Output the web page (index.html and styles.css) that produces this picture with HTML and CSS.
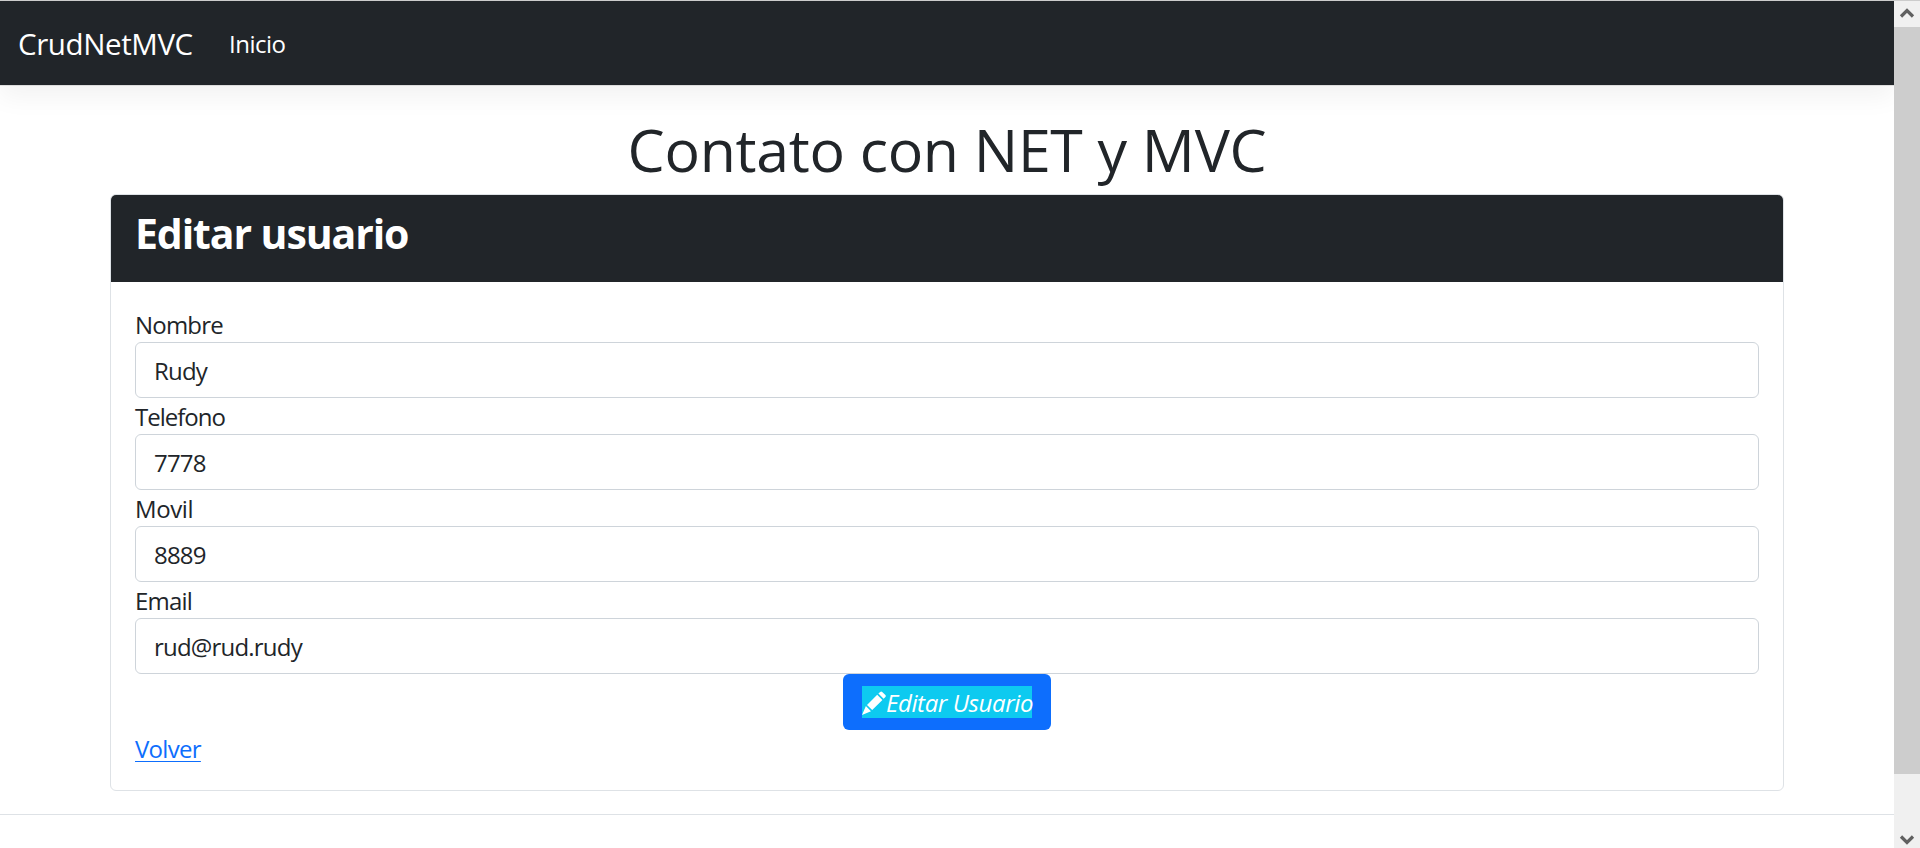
FILE: index.html
```html
<!DOCTYPE html>
<html lang="es">
<head>
<meta charset="utf-8">
<title>CrudNetMVC</title>
<link rel="stylesheet" href="styles.css">
</head>
<body>
<div class="window">
  <div class="page">
    <header class="navbar">
      <a class="brand" href="#">CrudNetMVC</a>
      <a class="nav-link" href="#">Inicio</a>
    </header>
    <main class="container">
      <h1 class="title"><span>Contato con NET y MVC</span></h1>
      <section class="card">
        <div class="card-header"><h3 class="card-title">Editar usuario</h3></div>
        <form class="card-body">
          <label class="label" for="nombre">Nombre</label>
          <input class="control" id="nombre" value="Rudy">
          <label class="label label-long" for="telefono">Telefono</label>
          <input class="control" id="telefono" value="7778">
          <label class="label label-short" for="movil">Movil</label>
          <input class="control" id="movil" value="8889">
          <label class="label" for="email">Email</label>
          <input class="control" id="email" value="rud@rud.rudy">
          <button class="btn" type="button"><span class="selected"><svg class="pencil" viewBox="0 0 24 24"><path d="M18.2.9Q19.2 0 20.2.9L23.4 4.100Q24.200 5 23.400 5.900L21.600 7.700 16.400 2.500ZM15.200 3.700 20.400 8.900 10.200 19.100 5 13.900ZM3.900 15.100 9 20.200 0 24Z"/></svg><em class="btn-text">Editar Usuario</em></span></button>
          <a class="back" href="#">Volver</a>
        </form>
      </section>
    </main>
    <footer class="footer"></footer>
  </div>
  <div class="scrollbar">
    <svg class="arrow" viewBox="0 0 26 26"><path d="M7 15.500 13 9.500 19 15.500"/></svg>
    <div class="thumb"></div>
    <svg class="arrow arrow-down" viewBox="0 0 26 22"><path d="M7 10.500 13 16.500 19 10.500"/></svg>
  </div>
</div>
</body>
</html>
```
FILE: styles.css
```css
* { box-sizing: border-box; }
body {
  margin: 0;
  overflow: hidden;
  background: #fff;
  color: #212529;
  font: 24px/36px "Open Sans", "Noto Sans", sans-serif;
}
.window {
  display: grid;
  grid-template-columns: 1fr 26px;
  height: 848px;
  border-top: 1px solid #ccc;
}
.page { overflow: hidden; }
.navbar {
  display: flex;
  align-items: center;
  gap: 35px;
  height: 84px;
  padding: 2px 18px 0;
  background: #212529;
  box-shadow: 0 12px 24px rgba(0, 0, 0, .05), 0 1px 0 #e5e5e5;
}
.brand, .nav-link { color: #fff; text-decoration: none; white-space: nowrap; }
.brand { width: 176px; font-size: 29.5px; letter-spacing: -.4px; }
.nav-link { letter-spacing: -.5px; }
.container { padding: 34px 110px 0; }
.title {
  margin: 0;
  height: 75px;
  font-size: 59px;
  font-weight: 400;
  line-height: 60px;
  text-align: center;
  letter-spacing: -.3px;
}
.card {
  height: 597px;
  border: 1px solid #dee2e6;
  border-radius: 6px;
  overflow: hidden;
}
.card-header { height: 87px; padding: 13px 24px; background: #212529; }
.card-title {
  margin: 0;
  color: #fff;
  font-size: 41px;
  line-height: 50px;
  letter-spacing: -1.1px;
}
.card-body { display: flex; flex-direction: column; padding: 24px; }
.label { height: 36px; padding-top: 1px; letter-spacing: -.8px; }
.label-long { letter-spacing: -1px; }
.label-short { letter-spacing: -.4px; }
.control {
  height: 56px;
  padding: 1px 18px 0;
  border: 1px solid #ced4da;
  border-radius: 6px;
  color: #212529;
  background: #fff;
  font: inherit;
  letter-spacing: -.8px;
}
.btn {
  align-self: center;
  display: flex;
  align-items: center;
  width: 208px;
  height: 56px;
  padding: 0 19px;
  border: 0;
  border-radius: 6px;
  background: #0d6efd;
  color: #fff;
  font: inherit;
}
.selected {
  display: flex;
  align-items: center;
  width: 170px;
  height: 32px;
  background: #0dcaf0;
  white-space: nowrap;
}
.pencil { flex: none; width: 24px; height: 24px; margin-top: 2px; fill: #fff; }
.btn-text { padding-top: 2px; letter-spacing: -.4px; }
.back {
  align-self: flex-start;
  margin-top: 1px;
  color: #0d6efd;
  letter-spacing: -.7px;
  text-decoration-thickness: 1px;
  text-underline-offset: 3px;
}
.footer { height: 34px; margin-top: 23px; border-top: 1px solid #dee2e6; }
.scrollbar { display: flex; flex-direction: column; background: #f0f0f0; }
.arrow { flex: none; width: 26px; height: 26px; fill: none; stroke: #606060; stroke-width: 3.2; }
.thumb { height: 747px; background: #cdcdcd; }
.arrow-down { height: 22px; margin-top: auto; }
```
